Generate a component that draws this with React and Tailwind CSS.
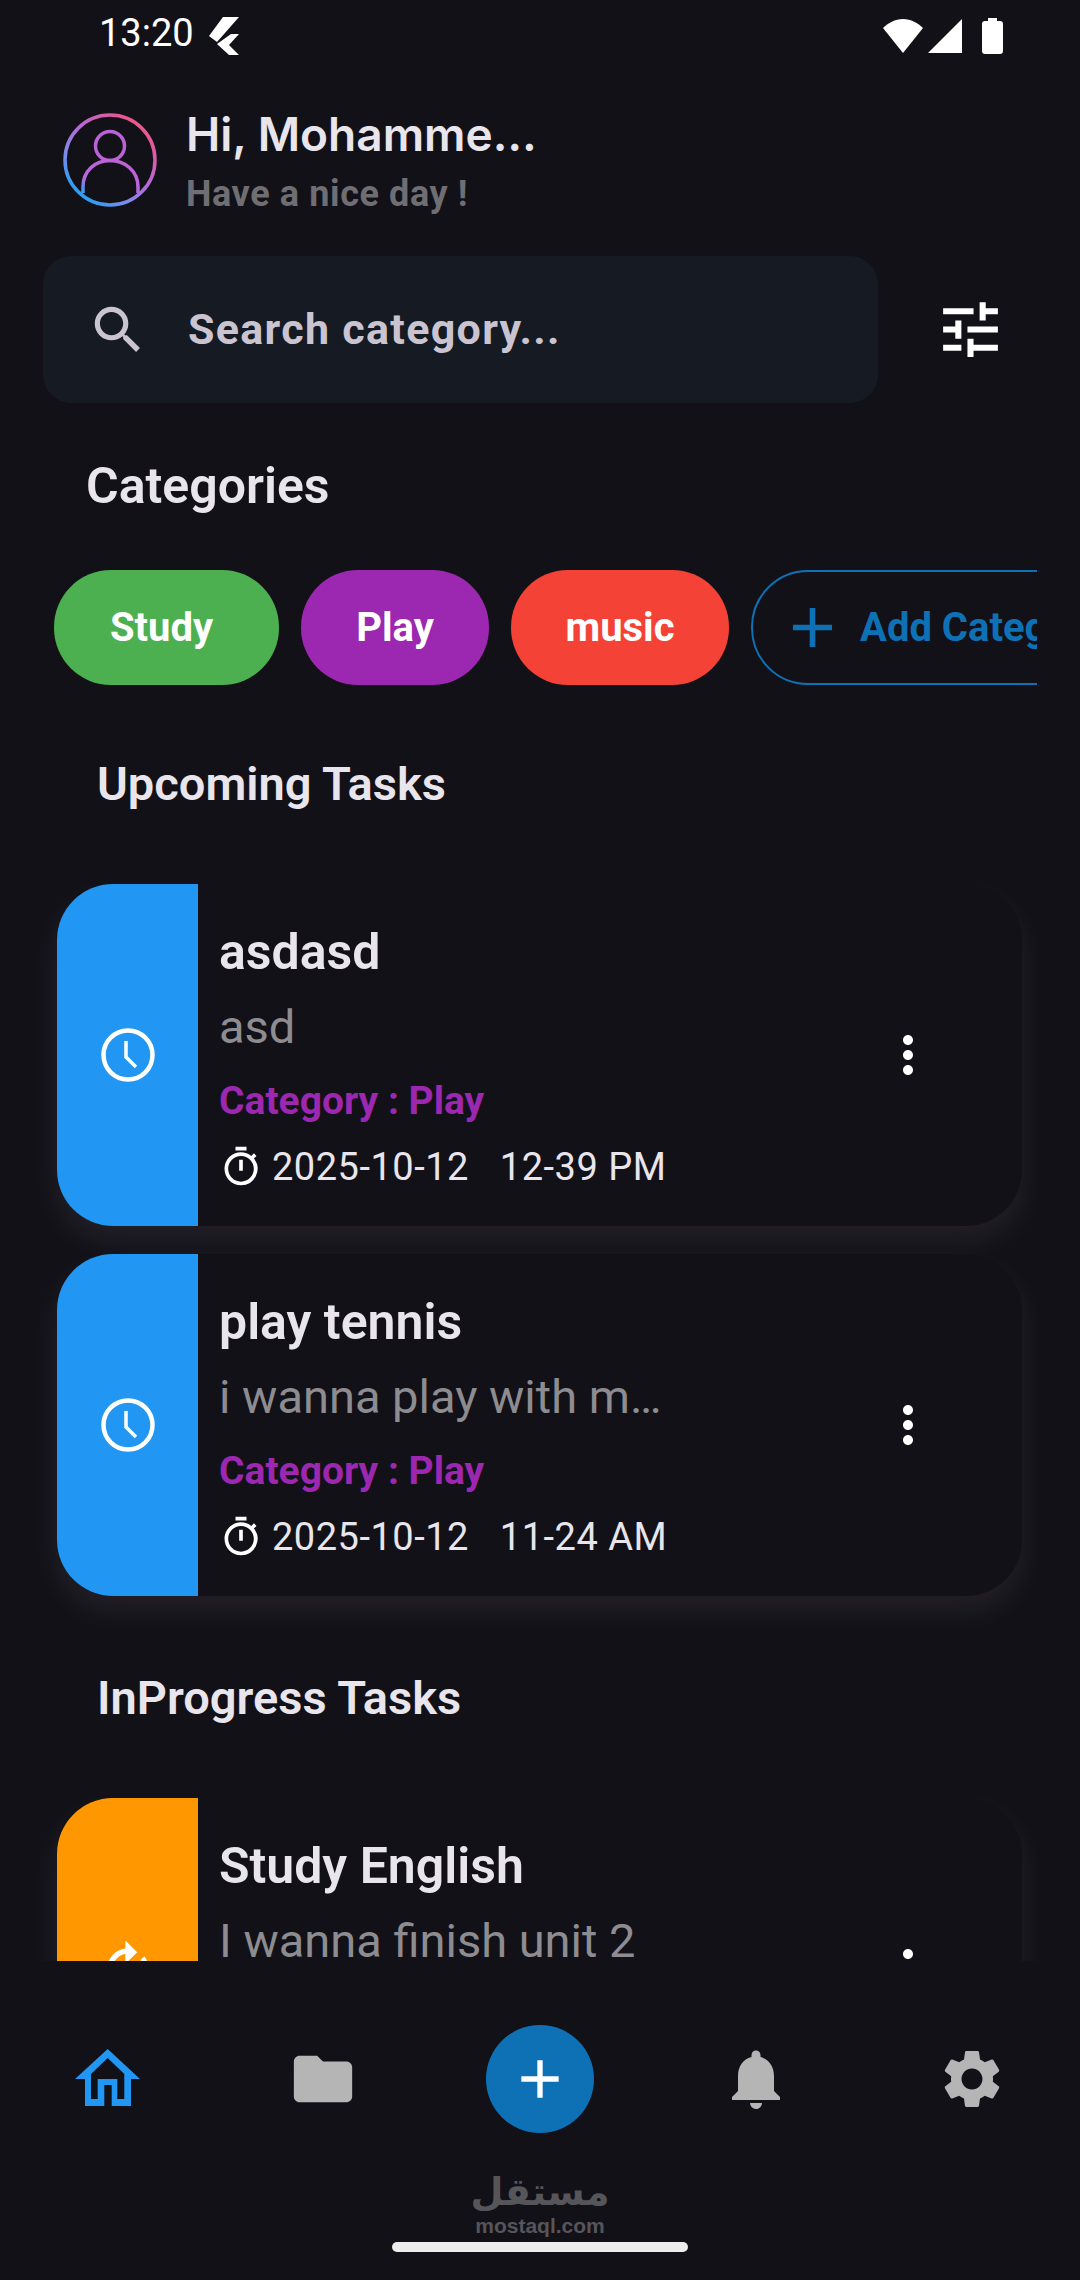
import { MdAdd, MdFolder, MdMoreVert, MdNotifications, MdOutlineTimer, MdRotateRight, MdSearch, MdSettings, MdTune } from 'react-icons/md';

const tasks = [
  { title: 'asdasd', body: 'asd', date: '2025-10-12', time: '12-39 PM' },
  { title: 'play tennis', body: 'i wanna play with m…', date: '2025-10-12', time: '11-24 AM' },
];

function FlutterMark() {
  return (
    <svg viewBox="0 0 30 38" className="h-[38px] w-[30px]" fill="#ffffff">
      <path d="M14 0h16L8 25 0 19z" />
      <path d="M22 17h8L20 28l10 10H20L8 27z" />
    </svg>
  );
}

function Avatar() {
  return (
    <svg viewBox="0 0 94 94" className="h-[94px] w-[94px] shrink-0" fill="none">
      <defs>
        <linearGradient id="ring" x1="0.85" y1="0.1" x2="0.2" y2="0.9">
          <stop offset="0" stopColor="#f0568a" />
          <stop offset="0.45" stopColor="#b668d8" />
          <stop offset="0.75" stopColor="#7f8be8" />
          <stop offset="1" stopColor="#2f9df4" />
        </linearGradient>
        <linearGradient id="person" x1="0.7" y1="0.2" x2="0.1" y2="1">
          <stop offset="0" stopColor="#bc63d6" />
          <stop offset="0.7" stopColor="#b46be0" />
          <stop offset="1" stopColor="#3d9bf2" />
        </linearGradient>
      </defs>
      <circle cx="47" cy="47" r="45" stroke="url(#ring)" strokeWidth="3.5" />
      <circle cx="47" cy="33" r="14.5" stroke="#b963d6" strokeWidth="3.5" />
      <path d="M20 80V74C20 58 32 47.5 47 47.5S75 58 75 74v6" stroke="url(#person)" strokeWidth="3.5" />
    </svg>
  );
}

function ClockIcon() {
  return (
    <svg viewBox="0 0 56 56" className="h-[56px] w-[56px]" fill="none" stroke="#ffffff">
      <circle cx="28" cy="28" r="24.5" strokeWidth="4.5" />
      <path d="M26 14v16l10 10" strokeWidth="3.5" />
    </svg>
  );
}

function HomeIcon() {
  return (
    <svg viewBox="0 0 65 57" className="mb-[3px] h-[57px] w-[65px]" fill="#2196f3">
      <path fillRule="evenodd" d="M32.7 0 65 30h-9v27H36.7V36h-7.4v21H10V30H0zM32.7 9 16 25v25h6.7V30h19.6v20h7V25z" />
    </svg>
  );
}

function TaskText({ title, body }) {
  return (
    <>
      <p className="text-[50px] leading-[54px] font-semibold text-[#e8e5ec]">{title}</p>
      <p className="mt-[22px] text-[47px] leading-[52px] text-[#8d8c90]">{body}</p>
    </>
  );
}

function TaskCard({ task }) {
  return (
    <div className="flex h-[342px] w-[965px] shrink-0 overflow-hidden rounded-[56px] bg-[#131118] shadow-[0_14px_28px_4px_rgba(255,255,255,0.06)]">
      <div className="flex w-[141px] shrink-0 items-center justify-center bg-[#2196f3]">
        <ClockIcon />
      </div>
      <div className="flex min-w-0 flex-1 flex-col pl-[21px] pt-[41px]">
        <TaskText title={task.title} body={task.body} />
        <p className="mt-[25px] text-[39px] leading-[46px] font-bold text-[#9c27b0]">Category : Play</p>
        <div className="mt-[20px] flex items-center text-[38px] leading-[46px] text-[#e8e5ec]">
          <MdOutlineTimer className="text-[44px] text-white" />
          <span className="ml-[9px] tracking-[0.5px]">{task.date}</span>
          <span className="ml-[31px] tracking-[0.5px]">{task.time}</span>
        </div>
      </div>
      <div className="flex w-[170px] shrink-0 items-center pl-[26px]">
        <MdMoreVert className="text-[60px] text-white" />
      </div>
    </div>
  );
}

export default function App() {
  return (
    <div className="flex h-[2280px] w-[1080px] flex-col overflow-hidden bg-[#131118] font-['Roboto',sans-serif]">
      <div className="flex h-[68px] items-center justify-between pl-[99px] pr-[77px] pt-[4px]">
        <div className="flex items-center">
          <span className="-mt-[6px] text-[38px] leading-none text-white">13:20</span>
          <span className="ml-[15px]"><FlutterMark /></span>
        </div>
        <div className="flex items-center">
          <svg viewBox="0 0 40 34" className="h-[34px] w-[40px]" fill="#ffffff"><path d="M20 34 0 9C5 4 12 0 20 0s15 4 20 9z" /></svg>
          <svg viewBox="0 0 34 34" className="ml-[5px] h-[34px] w-[34px]" fill="#ffffff"><path d="M34 0v34H0z" /></svg>
          <svg viewBox="0 0 21 36" className="ml-[20px] h-[36px] w-[21px]" fill="#ffffff"><path d="M6 0h9v3h3q3 0 3 3v27q0 3-3 3H3q-3 0-3-3V6q0-3 3-3h3z" /></svg>
        </div>
      </div>

      <div className="mt-[45px] flex h-[94px] items-center pl-[63px]">
        <Avatar />
        <div className="ml-[29px] flex flex-col">
          <p className="font-['Inter',sans-serif] text-[46px] leading-[50px] font-semibold text-[#e8e5ec]">Hi, Mohamme…</p>
          <p className="mt-[17px] text-[36px] leading-[36px] font-bold tracking-[0.6px] text-[#6f6e73]">Have a nice day !</p>
        </div>
      </div>

      <div className="mt-[49px] flex items-center pl-[43px]">
        <div className="flex h-[147px] w-[835px] items-center rounded-[28px] bg-[#151a23] pl-[44px]">
          <MdSearch className="text-[62px] text-[#cac4d0]" />
          <span className="ml-[39px] text-[43px] font-bold tracking-[1.3px] text-[#cac4d0]">Search category...</span>
        </div>
        <MdTune className="ml-[56px] text-[73px] text-white" />
      </div>

      <h2 className="mt-[56px] pl-[86px] text-[50px] leading-[54px] font-semibold text-[#e8e5ec]">Categories</h2>

      <div className="mt-[57px] ml-[54px] flex h-[115px] w-[983px] gap-[22px] overflow-hidden">
        <div className="flex w-[225px] shrink-0 items-center justify-center rounded-[57px] bg-[#4caf50] pr-[10px] text-[40px] font-bold text-white">Study</div>
        <div className="flex w-[188px] shrink-0 items-center justify-center rounded-[57px] bg-[#9c27b0] text-[40px] font-bold text-white">Play</div>
        <div className="flex w-[218px] shrink-0 items-center justify-center rounded-[57px] bg-[#f44336] text-[40px] font-bold text-white">music</div>
        <div className="flex w-[360px] shrink-0 items-center rounded-[57px] border-2 border-[#0f71b5] pl-[26px] text-[40px] font-bold whitespace-nowrap text-[#0f71b5]">
          <MdAdd className="shrink-0 text-[67px]" />
          <span className="ml-[14px]">Add Category</span>
        </div>
      </div>

      <h2 className="mt-[72px] pl-[97px] text-[47px] leading-[54px] font-semibold text-[#e8e5ec]">Upcoming Tasks</h2>

      <div className="mt-[73px] flex w-[1037px] flex-col gap-[28px] overflow-hidden pb-[36px] pl-[57px]">
        {tasks.map((task) => (
          <TaskCard key={task.title} task={task} />
        ))}
      </div>

      <h2 className="mt-[39px] pl-[97px] text-[47px] leading-[54px] font-semibold text-[#e8e5ec]">InProgress Tasks</h2>

      <div className="mt-[73px] h-[163px] w-[1037px] overflow-hidden pl-[57px]">
        <div className="flex h-[342px] w-[965px] overflow-hidden rounded-[56px] bg-[#131118] shadow-[0_14px_28px_4px_rgba(255,255,255,0.06)]">
          <div className="flex w-[141px] shrink-0 items-center justify-center bg-[#ff9800]">
            <MdRotateRight className="text-[62px] text-white" />
          </div>
          <div className="flex min-w-0 flex-1 flex-col pl-[21px] pt-[41px]">
            <TaskText title="Study English" body="I wanna finish unit 2" />
          </div>
          <div className="flex w-[170px] shrink-0 items-center pl-[26px]">
            <MdMoreVert className="text-[60px] text-white" />
          </div>
        </div>
      </div>

      <div className="mt-[64px] flex h-[108px] items-center">
        <div className="flex w-[215px] justify-center"><HomeIcon /></div>
        <div className="flex w-[216px] justify-center"><MdFolder className="text-[70px] text-[#b5b5b5]" /></div>
        <div className="flex w-[218px] justify-center">
          <div className="flex h-[108px] w-[108px] items-center justify-center rounded-full bg-[#0f71b5]">
            <MdAdd className="text-[64px] text-white" />
          </div>
        </div>
        <div className="flex w-[214px] justify-center"><MdNotifications className="text-[72px] text-[#b5b5b5]" /></div>
        <div className="flex w-[217px] justify-center"><MdSettings className="text-[70px] text-[#b5b5b5]" /></div>
      </div>

      <div className="mt-[35px] flex flex-col items-center text-[#56555a]">
        <span className="font-['DejaVu_Sans',sans-serif] text-[38px] leading-[48px] font-bold">مستقل</span>
        <span className="font-['Liberation_Sans',sans-serif] text-[21px] leading-[20px] font-bold">mostaql.com</span>
      </div>
      <div className="mx-auto mt-[6px] h-[10px] w-[296px] rounded-full bg-[#ededed]" />
    </div>
  );
}
